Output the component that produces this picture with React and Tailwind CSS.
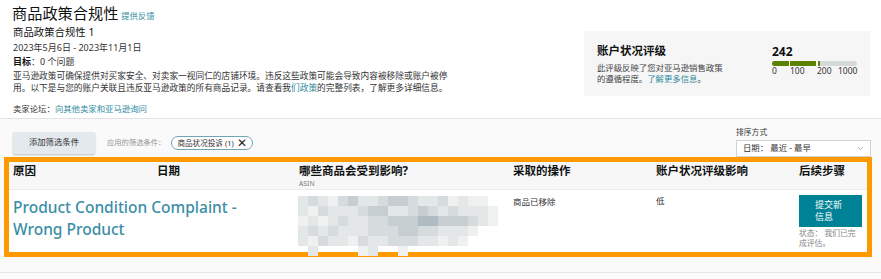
import { ChevronDown } from "lucide-react"

const shades = {
  "0": "bg-transparent",
  "1": "bg-[#eff1f1]",
  "2": "bg-[#e3e7e8]",
  "3": "bg-[#d6dcde]",
  "4": "bg-[#c6ced1]",
  "5": "bg-[#afbbc0]",
}

// pixelated (hidden) product info
const mosaic = [
  "232134223443223121100",
  "213222344223432322210",
  "121232233444554443210",
  "232322233344332221000",
  "213221322333221210000",
  "020000120010000000000",
]

function Mosaic() {
  return (
    <div className="flex flex-col mt-[6px] -ml-[1px]">
      {mosaic.map((row, r) => (
        <div key={r} className="flex">
          {row.split("").map((c, i) => (
            <div key={i} className={`w-[10px] h-[10px] ${shades[c]}`} />
          ))}
        </div>
      ))}
    </div>
  )
}

function HealthCard() {
  return (
    <div className="mt-[31px] w-[286px] h-[65px] bg-[#f6f6f6] flex pl-[13px] pt-[12px]">
      <div className="w-[175px]">
        <div className="text-[11.5px] leading-[16px] font-bold text-[#0f1111]">账户状况评级</div>
        <div className="mt-[3px] text-[8.4px] leading-[11px] text-[#444]">
          此评级反映了您对亚马逊销售政策
          <br />
          的遵循程度。<span className="text-[#2f8aa0]">了解更多信息</span>。
        </div>
      </div>
      <div className="pt-[1px]">
        <div className="text-[12px] leading-[15px] font-bold text-[#0f1111]">242</div>
        <div className="mt-[2px] w-[85px] h-[5px] rounded-full bg-[#d5d9d9] flex overflow-hidden">
          <div className="w-[17px] h-full bg-[#5b8200]" />
          <div className="w-[1px] h-full bg-white" />
          <div className="w-[26px] h-full bg-[#5b8200]" />
          <div className="w-[2px] h-full bg-white" />
          <div className="w-[2px] h-full bg-[#5b8200]" />
        </div>
        <div className="relative h-[10px] text-[8.5px] leading-[10px] text-[#333]">
          <span className="absolute left-0">0</span>
          <span className="absolute left-[18px]">100</span>
          <span className="absolute left-[45px]">200</span>
          <span className="absolute left-[66px]">1000</span>
        </div>
      </div>
    </div>
  )
}

export default function App() {
  return (
    <div className="w-[881px] h-[279px] overflow-hidden bg-[#fafafa] font-['Noto_Sans','Noto_Sans_CJK_SC',sans-serif] text-[#0f1111]">
      <div className="h-[119px] bg-white border-b border-[#e3e3e3] flex justify-between pl-[12px] pr-[11px]">
        <div className="pt-[3px]">
          <div className="flex items-baseline gap-[3px] h-[20px]">
            <span className="text-[15.2px] leading-[20px]">商品政策合规性</span>
            <span className="text-[8.3px] text-[#2f8aa0]">提供反馈</span>
          </div>
          <div className="pl-[1px] text-[10.4px] leading-[14px] mt-[2px]">商品政策合规性 1</div>
          <div className="pl-[1px] text-[9px] leading-[14px] mt-[2px] text-[#333]">2023年5月6日 - 2023年11月1日</div>
          <div className="pl-[1px] text-[9px] leading-[14px] text-[#333]">
            <span className="font-bold text-[#0f1111]">目标</span>：0 个问题
          </div>
          <div className="pl-[1px] text-[8.7px] leading-[12px] mt-[1px] text-[#333] whitespace-nowrap">
            亚马逊政策可确保提供对买家安全、对卖家一视同仁的店铺环境。违反这些政策可能会导致内容被移除或账户被停
            <br />
            用。以下是与您的账户关联且违反亚马逊政策的所有商品记录。请查看我<span className="text-[#2f8aa0]">们政策</span>的完整列表，了解更多详细信息。
          </div>
          <div className="pl-[1px] text-[8.4px] leading-[14px] mt-[8px] text-[#333]">
            卖家论坛：<span className="text-[#2f8aa0]">向其他卖家和亚马逊询问</span>
          </div>
        </div>
        <HealthCard />
      </div>

      <div className="h-[38px] flex justify-between pl-[13px] pr-[10px]">
        <div className="flex items-center pt-[6px] h-[35px] self-end">
          <button className="w-[82px] h-[22px] bg-[#e3e9ec] rounded-[2px] shadow-[0_1px_2px_rgba(0,0,0,0.25)] text-[8.4px] text-[#333]">
            添加筛选条件
          </button>
          <span className="ml-[12px] text-[7.3px] text-[#999]">应用的筛选条件：</span>
          <span className="ml-[6px] h-[14px] w-[82px] rounded-full border border-[#6fa6b6] bg-white flex items-center pl-[5px] gap-[3px]">
            <span className="text-[7.6px] leading-[10px] text-[#333]">商品状况投诉 (1)</span>
            <span className="text-[12px] leading-[10px] text-[#222]">✕</span>
          </span>
        </div>
        <div className="flex flex-col pt-[8px]">
          <span className="text-[7.8px] leading-[10px] text-[#333]">排序方式</span>
          <div className="mt-[3px] w-[135px] h-[17px] bg-white border border-[#cfd3d3] flex items-center justify-between pl-[6px] pr-[5px]">
            <span className="text-[8.4px] text-[#333]">日期：&nbsp;最近 - 最早</span>
            <ChevronDown size={9} strokeWidth={1.5} className="text-[#777]" />
          </div>
        </div>
      </div>

      <div className="ml-[4px] w-[868px] h-[100px] border-[5px] border-[#ff9900] bg-white">
        <div className="h-[28px] bg-[#f7f7f7] border-b border-[#ebebeb] pl-[4px] grid grid-cols-[144px_142px_214px_143px_143px_1fr] text-[11.5px] leading-[16px] font-bold">
          <div className="pt-[1px]">原因</div>
          <div className="pt-[1px]">日期</div>
          <div className="pt-[1px]">
            哪些商品会受到影响?
            <div className="text-[6.8px] leading-[9px] font-normal text-[#777]">ASIN</div>
          </div>
          <div className="pt-[1px]">采取的操作</div>
          <div className="pt-[1px]">账户状况评级影响</div>
          <div className="pt-[1px]">后续步骤</div>
        </div>
        <div className="h-[62px] pl-[4px] grid grid-cols-[144px_142px_214px_143px_143px_1fr]">
          <div className="col-span-2 pt-[6px] text-[15.5px] leading-[22px] font-medium text-[#3b8ea6] w-[250px]">
            Product Condition Complaint -
            <br />
            Wrong Product
          </div>
          <Mosaic />
          <div className="pt-[6px] text-[8.5px] leading-[12px] text-[#333]">商品已移除</div>
          <div className="pt-[5px] text-[8.5px] leading-[12px] text-[#333]">低</div>
          <div className="pt-[5px]">
            <button className="w-[63px] h-[32px] bg-[#008296] text-white text-[9px] leading-[12px] text-left pl-[16px]">
              提交新
              <br />
              信息
            </button>
            <div className="mt-[1px] text-[7.8px] leading-[10px] text-[#888] whitespace-nowrap">
              状态：&nbsp;我们已完
              <br />
              成评估。
            </div>
          </div>
        </div>
      </div>

      <div className="mt-[15px] border-t border-[#e6e6e6]" />
    </div>
  )
}
